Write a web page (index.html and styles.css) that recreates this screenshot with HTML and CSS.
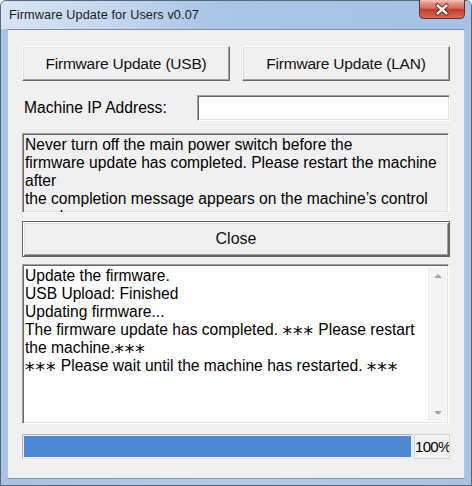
FILE: index.html
```html
<!DOCTYPE html>
<html lang="en">
<head>
<meta charset="utf-8">
<title>Firmware Update for Users v0.07</title>
<link rel="stylesheet" href="styles.css">
</head>
<body>
<div class="window">
  <div class="titlebar">
    <span class="title">Firmware Update for Users v0.07</span>
    <div class="close-x" aria-label="Close">
      <svg width="46" height="19" viewBox="0 0 46 19">
        <defs>
          <linearGradient id="cg" x1="0" y1="0" x2="0" y2="1">
            <stop offset="0" stop-color="#eab0a4"/>
            <stop offset="0.45" stop-color="#d66a5c"/>
            <stop offset="0.5" stop-color="#c43a2a"/>
            <stop offset="1" stop-color="#d8705e"/>
          </linearGradient>
        </defs>
        <path d="M0.5 0 V14.5 Q0.5 18.5 4.5 18.5 H41.5 Q45.5 18.5 45.5 14.5 V0" fill="url(#cg)" stroke="#6e2a22"/>
        <path d="M1.5 1 H44.5" stroke="#f3c9c0" stroke-width="1"/>
        <path d="M18.5 5.5 L27.5 13.5 M27.5 5.5 L18.5 13.5" stroke="#5a1d16" stroke-width="4.2" stroke-linecap="round"/>
        <path d="M18.5 5.5 L27.5 13.5 M27.5 5.5 L18.5 13.5" stroke="#ffffff" stroke-width="2.4" stroke-linecap="round"/>
      </svg>
    </div>
  </div>
  <div class="client">
    <div class="row-buttons">
      <div class="btn">Firmware Update (USB)</div>
      <div class="btn">Firmware Update (LAN)</div>
    </div>
    <div class="row-ip">
      <span class="ip-label">Machine IP Address:</span>
      <div class="field"></div>
    </div>
    <div class="notice sunken">Never turn off the main power switch before the<br>firmware update has completed. Please restart the machine<br>after<br>the completion message appears on the machine’s control<br>panel.</div>
    <div class="btn btn-default">Close</div>
    <div class="log sunken">
      <div class="log-text">Update the firmware.<br>USB Upload: Finished<br>Updating firmware...<br>The firmware update has completed. <span class="ast">***</span> Please restart<br>the machine.<span class="ast">***</span><br><span class="ast">***</span> Please wait until the machine has restarted. <span class="ast">***</span></div>
      <div class="scrollbar">
        <span class="arrow arrow-up"></span>
        <span class="arrow arrow-down"></span>
      </div>
    </div>
    <div class="progress-row">
      <div class="progress"><div class="fill" style="width:100%"></div></div>
      <div class="pct">100%</div>
    </div>
  </div>
</div>
</body>
</html>
```
FILE: styles.css
```css
html, body {
  margin: 0;
  padding: 0;
  background: #ffffff;
}

.window {
  box-sizing: border-box;
  width: 472px;
  height: 486px;
  border: 1px solid #55657a;
  border-radius: 6px 6px 0 0;
  background: linear-gradient(to right, #a9c3e4 0%, #b3cbe8 50%, #a9c3e4 100%);
  padding: 0 6px 6px;
  display: flex;
  flex-direction: column;
  font-family: "Liberation Sans", Arial, sans-serif;
  color: #000;
}

.titlebar {
  height: 28px;
  display: flex;
  align-items: flex-start;
  margin: 0 -6px;
  padding: 0 6px 0 8px;
  border-radius: 5px 5px 0 0;
  background: linear-gradient(to right, #d7e4f3 0%, #c2d6ee 25%, #aac5e6 45%, #a6c1e4 100%);
}

.title {
  font-size: 12.7px;
  line-height: 28px;
  letter-spacing: 0.1px;
  color: #1a1a1a;
}

.close-x {
  margin-left: auto;
  height: 19px;
  width: 46px;
  margin-top: -1px;
}

.close-x svg {
  display: block;
}

.client {
  flex: 1;
  border: 1px solid #7d8ea6;
  border-left-color: #b9c6d6;
  border-right-color: #b9c6d6;
  border-bottom-color: #8593a7;
  background: #f0f0f0;
  padding: 16px 14px 0 14px;
  display: flex;
  flex-direction: column;
  font-size: 15.5px;
}

.btn {
  box-sizing: border-box;
  height: 35px;
  display: flex;
  align-items: center;
  justify-content: center;
  background: #f0f0f0;
  border: 1px solid;
  border-color: #ffffff #696969 #696969 #ffffff;
  box-shadow: inset -1px -1px 0 #a0a0a0, inset 1px 1px 0 #e3e3e3;
  font-size: 15.5px;
  letter-spacing: -0.2px;
  color: #111;
}

.row-buttons {
  display: grid;
  grid-template-columns: 208px 208px;
  column-gap: 12px;
}

.row-ip {
  margin-top: 14px;
  display: flex;
  align-items: center;
  height: 26px;
}

.ip-label {
  padding-left: 2px;
  width: 173px;
  font-size: 15.6px;
}

.field {
  box-sizing: border-box;
  width: 253px;
  height: 26px;
  background: #fff;
  border: 1px solid;
  border-color: #a0a0a0 #ffffff #ffffff #a0a0a0;
  box-shadow: inset 1px 1px 0 #696969, inset -1px -1px 0 #e3e3e3;
}

.sunken {
  box-sizing: border-box;
  border: 1px solid;
  border-color: #a0a0a0 #ffffff #ffffff #a0a0a0;
  box-shadow: inset 1px 1px 0 #696969, inset -1px -1px 0 #e3e3e3;
}

.notice {
  margin-top: 12px;
  height: 80px;
  width: 427px;
  overflow: hidden;
  padding: 2px 2px 0 2px;
  line-height: 18px;
  font-size: 15.6px;
  background: #f0f0f0;
  white-space: nowrap;
}

.btn-default {
  margin-top: 8px;
  height: 36px;
  font-size: 16px;
  letter-spacing: 0;
  border: 1px solid #646464;
  box-shadow: inset 1px 1px 0 #ffffff, inset -1px -1px 0 #696969, inset 2px 2px 0 #e3e3e3, inset -2px -2px 0 #a0a0a0;
}

.log {
  margin-top: 7px;
  height: 160px;
  width: 427px;
  background: #fff;
  display: flex;
  padding: 2px;
}

.log-text {
  flex: 1;
  line-height: 18px;
  font-size: 15.6px;
  white-space: nowrap;
  overflow: hidden;
}

.ast {
  font-family: "DejaVu Sans", sans-serif;
  font-size: 19px;
  line-height: 0;
  letter-spacing: 1px;
  vertical-align: -5px;
}

.scrollbar {
  width: 17px;
  background: #f4f4f4;
  border-left: 1px solid #eaeaea;
  display: flex;
  flex-direction: column;
  justify-content: space-between;
  align-items: center;
  padding: 7px 0 6px;
}

.arrow {
  width: 0;
  height: 0;
  border-left: 4px solid transparent;
  border-right: 4px solid transparent;
}

.arrow-up {
  border-bottom: 4px solid #a6a6a6;
}

.arrow-down {
  border-top: 4px solid #a6a6a6;
}

.progress-row {
  margin-top: 10px;
  display: flex;
  height: 25px;
}

.progress {
  box-sizing: border-box;
  width: 391px;
  height: 25px;
  border: 1px solid;
  border-color: #b4b4b4 #e8e8e8 #e8e8e8 #b4b4b4;
  padding: 1px;
  background: #f0f0f0;
}

.fill {
  height: 100%;
  background: #4d89d3;
}

.pct {
  box-sizing: border-box;
  margin-left: 1px;
  width: 36px;
  height: 25px;
  border: 1px solid #d6d6d6;
  font-size: 15px;
  letter-spacing: -0.7px;
  line-height: 23px;
  text-align: right;
  overflow: hidden;
  white-space: nowrap;
  background: #f3f3f3;
}
```
